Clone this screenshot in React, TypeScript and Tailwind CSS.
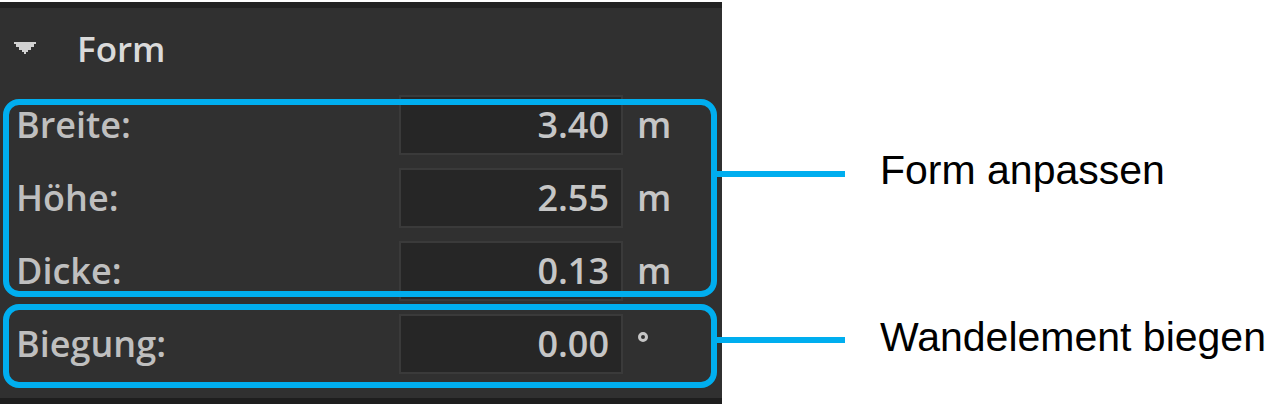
const rows = [
  { label: "Breite:", value: "3.40", unit: "m" },
  { label: "Höhe:", value: "2.55", unit: "m" },
  { label: "Dicke:", value: "0.13", unit: "m" },
  { label: "Biegung:", value: "0.00", unit: "°" },
];

function Caret() {
  return (
    <svg width="22" height="12" viewBox="0 0 22 12" className="shrink-0">
      <path d="M0 0h22v2h-2v3h-3v3h-3v2h-2v2h-2v-2H8V8H5V5H2V2H0z" fill="#d2d2d2" />
    </svg>
  );
}

function Row({ label, value, unit }: { label: string; value: string; unit: string }) {
  return (
    <div className="flex h-[73px] items-center">
      <span className="w-[399px] pl-[16px] text-[36px] font-semibold leading-none text-[#bfbfbf]">{label}</span>
      <div className="flex h-[60px] w-[224px] items-center justify-end border-2 border-[#3a3a3a] bg-[#262626] pr-[12px]">
        <span className="text-[36px] font-semibold leading-none text-[#c6c6c6]">{value}</span>
      </div>
      {unit === "°" ? (
        <span className="ml-[15px] mb-[14px] h-[10px] w-[10px] rounded-full border-[3px] border-[#c6c6c6]" />
      ) : (
        <span className="ml-[14px] text-[36px] font-semibold leading-none text-[#c6c6c6]">{unit}</span>
      )}
    </div>
  );
}

export default function App() {
  return (
    <div
      className="relative flex h-[404px] w-[1275px] overflow-hidden bg-white"
      style={{ fontFamily: '"Open Sans", "Noto Sans", sans-serif' }}
    >
      <div className="mt-[2px] flex w-[722px] flex-col border-y-[6px] border-t-[#222222] border-b-[#1e1e1e] bg-[#303030]">
        <div className="flex h-[80px] items-center pl-[14px]">
          <Caret />
          <span className="ml-[41px] text-[35px] font-semibold leading-none text-[#dadada]">Form</span>
        </div>
        {rows.map((r) => (
          <Row key={r.label} {...r} />
        ))}
      </div>

      <div className="flex flex-col pl-[158px]" style={{ fontFamily: '"Liberation Sans", Arial, sans-serif' }}>
        <span className="mt-[150px] text-[41px] leading-none text-black">Form anpassen</span>
        <span className="mt-[126px] whitespace-nowrap text-[41px] leading-none text-black">Wandelement biegen</span>
      </div>

      {/* annotation overlay */}
      <div className="pointer-events-none absolute left-[3px] top-[99px] h-[198px] w-[714px] rounded-[16px] border-[6px] border-[#00aeef]" />
      <div className="pointer-events-none absolute left-[3px] top-[304px] h-[84px] w-[714px] rounded-[16px] border-[6px] border-[#00aeef]" />
      <div className="pointer-events-none absolute left-[715px] top-[171px] h-[6px] w-[130px] bg-[#00aeef]" />
      <div className="pointer-events-none absolute left-[715px] top-[337px] h-[6px] w-[130px] bg-[#00aeef]" />
    </div>
  );
}
